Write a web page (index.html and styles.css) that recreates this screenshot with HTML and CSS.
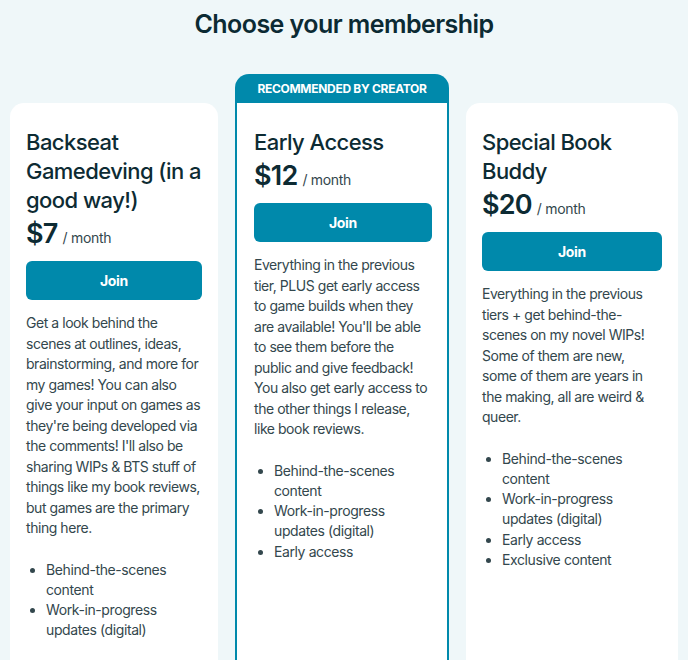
FILE: index.html
```html
<!DOCTYPE html>
<html>
<head>
<meta charset="utf-8">
<link rel="stylesheet" href="styles.css">
</head>
<body>
<div class="page">
  <h1 class="title">Choose your membership</h1>
  <div class="tiers">
    <div class="tier">
      <div class="card">
        <h2 class="name">Backseat Gamedeving (in a good way!)</h2>
        <div class="price"><span class="amount">$7</span><span class="per">/ month</span></div>
        <button class="join">Join</button>
        <p class="desc">Get a look behind the scenes at outlines, ideas, brainstorming, and more for my games! You can also give your input on games as they're being developed via the comments! I'll also be sharing WIPs &amp; BTS stuff of things like my book reviews, but games are the primary thing here.</p>
        <ul class="benefits">
          <li>Behind-the-scenes content</li>
          <li>Work-in-progress updates (digital)</li>
        </ul>
      </div>
    </div>
    <div class="tier featured">
      <div class="badge">RECOMMENDED BY CREATOR</div>
      <div class="card">
        <h2 class="name">Early Access</h2>
        <div class="price"><span class="amount">$12</span><span class="per">/ month</span></div>
        <button class="join">Join</button>
        <p class="desc">Everything in the previous tier, PLUS get early access to game builds when they are available! You'll be able to see them before the public and give feedback! You also get early access to the other things I release, like book reviews.</p>
        <ul class="benefits">
          <li>Behind-the-scenes content</li>
          <li>Work-in-progress updates (digital)</li>
          <li>Early access</li>
        </ul>
      </div>
    </div>
    <div class="tier">
      <div class="card">
        <h2 class="name">Special Book Buddy</h2>
        <div class="price"><span class="amount">$20</span><span class="per">/ month</span></div>
        <button class="join">Join</button>
        <p class="desc">Everything in the previous tiers + get behind-the-scenes on my novel WIPs! Some of them are new, some of them are years in the making, all are weird &amp; queer.</p>
        <ul class="benefits">
          <li>Behind-the-scenes content</li>
          <li>Work-in-progress updates (digital)</li>
          <li>Early access</li>
          <li>Exclusive content</li>
        </ul>
      </div>
    </div>
  </div>
</div>
</body>
</html>
```
FILE: styles.css
```css
* { box-sizing: border-box; }
html, body { margin: 0; padding: 0; }
body {
  background: #eff7f9;
  font-family: Inter, "Noto Sans", sans-serif;
  color: #0d2b33;
  width: 688px;
  height: 660px;
  overflow: hidden;
}
.page {
  padding: 8px 10px 0 10px;
}
.title {
  margin: 0;
  text-align: center;
  font-size: 25px;
  font-weight: 600;
  line-height: 32px;
  letter-spacing: -0.55px;
  color: #0b2a33;
}
.tiers {
  margin-top: 34px;
  display: grid;
  grid-template-columns: 208px 214px 212px;
  column-gap: 17px;
  align-items: start;
}
.tier {
  display: flex;
  flex-direction: column;
  padding-top: 29px;
}
.tier .card {
  background: #fff;
  border-radius: 14px 14px 0 0;
  padding: 25px 16px 40px 16px;
  min-height: 600px;
}
.tier.featured {
  padding-top: 0;
  background: #0089ab;
  border-radius: 14px 14px 0 0;
  padding-left: 2px;
  padding-right: 2px;
}
.featured .badge {
  height: 29px;
  display: flex;
  align-items: center;
  justify-content: center;
  color: #fff;
  font-size: 12px;
  font-weight: 700;
  letter-spacing: -0.3px;
}
.featured .card {
  border-radius: 0;
  padding-left: 17px;
  padding-right: 15px;
}
.name {
  margin: 0;
  font-size: 22px;
  font-weight: 500;
  line-height: 29px;
  letter-spacing: -0.55px;
}
.price {
  margin-top: 2px;
  display: flex;
  align-items: baseline;
  gap: 5px;
}
.amount {
  font-size: 27px;
  font-weight: 600;
  line-height: 34px;
  letter-spacing: -0.8px;
}
.per {
  font-size: 14px;
  color: #33474d;
  letter-spacing: -0.3px;
}
.join {
  margin-top: 10px;
  display: block;
  width: 100%;
  height: 39px;
  border: none;
  border-radius: 6px;
  background: #0089ab;
  color: #fff;
  font-family: inherit;
  font-size: 14px;
  font-weight: 700;
  letter-spacing: -0.3px;
}
.desc {
  margin: 13px 0 21px 0;
  font-size: 14px;
  line-height: 20.5px;
  letter-spacing: -0.45px;
  color: #33474d;
}
.benefits {
  margin: 0;
  padding-left: 20px;
  font-size: 14px;
  line-height: 20.3px;
  letter-spacing: -0.4px;
  color: #33474d;
}
```
